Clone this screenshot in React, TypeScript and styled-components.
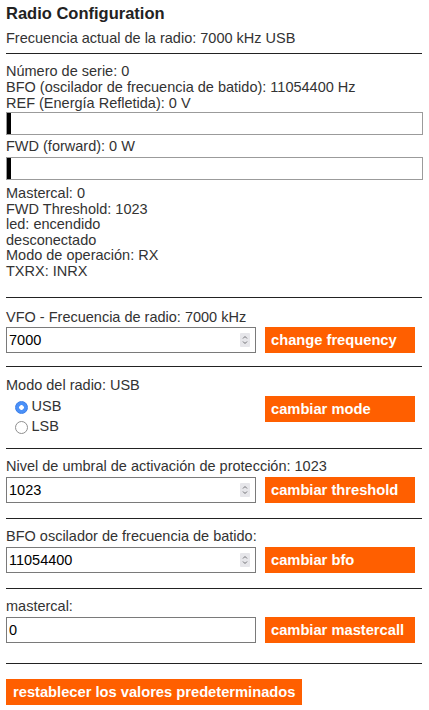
import React from "react";
import styled, { createGlobalStyle } from "styled-components";

const GlobalStyle = createGlobalStyle`
  html, body { margin: 0; padding: 0; background: #fff; }
  body { font-family: "Liberation Sans", Arial, sans-serif; font-size: 14.5px; color: #333; }
  * { box-sizing: border-box; }
`;

const Page = styled.div`
  width: 429px;
  padding: 0 6px 0 6px;
`;

const Title = styled.h1`
  margin: 3px 0 0;
  font-size: 16.5px;
  line-height: 20px;
  font-weight: bold;
  color: #222;
`;

const Line = styled.div<{ $lh?: number; $mt?: number }>`
  line-height: ${(p) => p.$lh ?? 16}px;
  margin-top: ${(p) => p.$mt ?? 0}px;
  white-space: nowrap;
`;

const Rule = styled.hr<{ $mt?: number; $mb?: number }>`
  border: 0;
  height: 1px;
  background: #222;
  margin: ${(p) => p.$mt ?? 0}px 1px ${(p) => p.$mb ?? 0}px 0;
`;

const InfoBlock = styled.div`
  display: flex;
  flex-direction: column;
`;

const MeterBox = styled.div<{ $mt: number }>`
  margin-top: ${(p) => p.$mt}px;
  height: 23px;
  border: 1px solid #9b9b9b;
  background: #fff;
  display: flex;
`;

const MeterFill = styled.div`
  background: #000;
  min-width: 4px;
  height: 100%;
`;

const Section = styled.section<{ $pt?: number; $pb?: number }>`
  padding-top: ${(p) => p.$pt ?? 9}px;
  padding-bottom: ${(p) => p.$pb ?? 14.5}px;
`;

const Label = styled.div<{ $gap?: number }>`
  line-height: 16px;
  margin-bottom: ${(p) => p.$gap ?? 3}px;
  white-space: nowrap;
`;

const Row = styled.div<{ $align?: string }>`
  display: grid;
  grid-template-columns: 250px 150px;
  column-gap: 9px;
  align-items: ${(p) => p.$align ?? "center"};
`;

const InputBox = styled.div`
  height: 26px;
  border: 1px solid #7a7a7a;
  background: #fff;
  display: flex;
  align-items: center;
  padding: 0 5px 0 1px;
`;

const Field = styled.input`
  flex: 1;
  min-width: 0;
  border: 0;
  outline: none;
  background: transparent;
  font-family: "Liberation Sans", Arial, sans-serif;
  font-size: 14.5px;
  color: #000;
  padding: 0 0 0 1px;
  height: 100%;
  &::-webkit-inner-spin-button,
  &::-webkit-outer-spin-button {
    -webkit-appearance: none;
    margin: 0;
  }
  -moz-appearance: textfield;
`;

const Spinner = styled.span`
  width: 10px;
  height: 14px;
  background: #e6e6ea;
  border-radius: 1px;
  display: flex;
  align-items: center;
  justify-content: center;
  flex: none;
`;

const ActionButton = styled.button<{ $auto?: boolean }>`
  height: 26px;
  width: ${(p) => (p.$auto ? "auto" : "150px")};
  border: 0;
  border-radius: 0;
  background: #ff5f00;
  color: #fff;
  font-family: "Liberation Sans", Arial, sans-serif;
  font-weight: bold;
  font-size: 14.7px;
  text-align: left;
  padding: 0 ${(p) => (p.$auto ? 7 : 6)}px;
  white-space: nowrap;
  cursor: pointer;
`;

const RadioGroup = styled.div`
  display: flex;
  flex-direction: column;
`;

const RadioRow = styled.label`
  display: flex;
  align-items: center;
  height: 20px;
  padding-left: 8.5px;
  line-height: 16px;
  gap: 4px;
`;

const Radio = styled.input`
  appearance: none;
  -webkit-appearance: none;
  margin: 4px 0 0;
  width: 13px;
  height: 13px;
  border-radius: 50%;
  border: 1px solid #8f8f8f;
  background: #fff;
  flex: none;
  &:checked {
    border-color: #3a7ee8;
    background: radial-gradient(circle, #fff 0 2px, #4a90f8 2.6px);
  }
`;

const SpinIcon = () => (
  <svg width="10" height="14" viewBox="0 0 10 14">
    <path d="M3 5.5 L5 3.5 L7 5.5" fill="none" stroke="#6e6e72" strokeWidth="1" />
    <path d="M3 8.5 L5 10.5 L7 8.5" fill="none" stroke="#6e6e72" strokeWidth="1" />
  </svg>
);

const NumberInput = ({ value }: { value: string }) => (
  <InputBox>
    <Field type="number" defaultValue={value} />
    <Spinner>
      <SpinIcon />
    </Spinner>
  </InputBox>
);

const Meter = ({ value, mt }: { value: number; mt: number }) => (
  <MeterBox $mt={mt}>
    <MeterFill style={{ width: `${value}%` }} />
  </MeterBox>
);

export default function App() {
  return (
    <Page>
      <GlobalStyle />
      <Title>Radio Configuration</Title>
      <Line $mt={7}>Frecuencia actual de la radio: 7000 kHz USB</Line>
      <Rule $mt={7} $mb={9} />
      <InfoBlock>
        <Line>Número de serie: 0</Line>
        <Line>BFO (oscilador de frecuencia de batido): 11054400 Hz</Line>
        <Line>REF (Energía Refletida): 0 V</Line>
        <Meter value={0} mt={1} />
        <Line $mt={3}>FWD (forward): 0 W</Line>
        <Meter value={0} mt={3} />
        <Line $mt={6} $lh={15.6}>Mastercal: 0</Line>
        <Line $lh={15.6}>FWD Threshold: 1023</Line>
        <Line $lh={15.6}>led: encendido</Line>
        <Line $lh={15.6}>desconectado</Line>
        <Line $lh={15.6}>Modo de operación: RX</Line>
        <Line $lh={15.6}>TXRX: INRX</Line>
      </InfoBlock>
      <Rule $mt={17} />

      <Section $pt={11} $pb={13}>
        <Label $gap={2}>VFO - Frecuencia de radio: 7000 kHz</Label>
        <Row>
          <NumberInput value="7000" />
          <ActionButton>change frequency</ActionButton>
        </Row>
      </Section>
      <Rule />

      <Section $pt={10} $pb={12.5}>
        <Label>Modo del radio: USB</Label>
        <Row $align="start">
          <RadioGroup>
            <RadioRow>
              <Radio type="radio" name="mode" defaultChecked />
              USB
            </RadioRow>
            <RadioRow>
              <Radio type="radio" name="mode" />
              LSB
            </RadioRow>
          </RadioGroup>
          <ActionButton>cambiar mode</ActionButton>
        </Row>
      </Section>
      <Rule />

      <Section>
        <Label>Nivel de umbral de activación de protección: 1023</Label>
        <Row>
          <NumberInput value="1023" />
          <ActionButton>cambiar threshold</ActionButton>
        </Row>
      </Section>
      <Rule />

      <Section>
        <Label $gap={3.5}>BFO oscilador de frecuencia de batido:</Label>
        <Row>
          <NumberInput value="11054400" />
          <ActionButton>cambiar bfo</ActionButton>
        </Row>
      </Section>
      <Rule />

      <Section $pb={20.5}>
        <Label>mastercal:</Label>
        <Row>
          <InputBox>
            <Field type="text" defaultValue="0" />
          </InputBox>
          <ActionButton>cambiar mastercall</ActionButton>
        </Row>
      </Section>
      <Rule />

      <Section $pt={14.7} $pb={0}>
        <ActionButton $auto>restablecer los valores predeterminados</ActionButton>
      </Section>
    </Page>
  );
}
